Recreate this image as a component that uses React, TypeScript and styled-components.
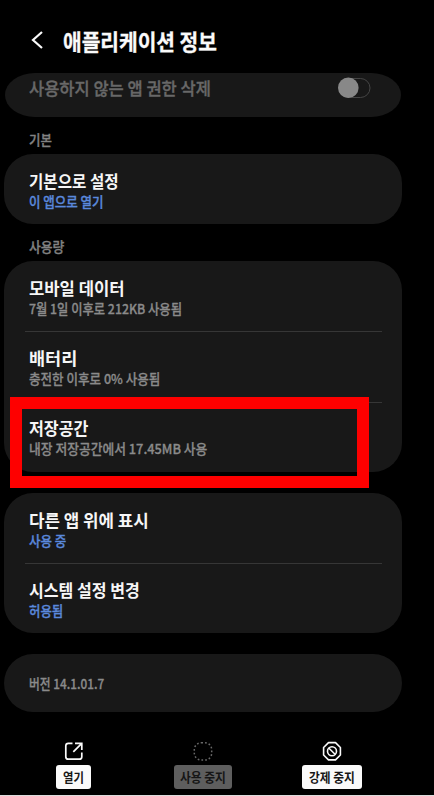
import React, { useLayoutEffect, useRef, useState } from "react";
import styled, { createGlobalStyle } from "styled-components";

const GlobalStyle = createGlobalStyle`
  *, *::before, *::after { box-sizing: border-box; }
  body {
    margin: 0;
    background: #000;
    color: #fafafa;
    font-family: "Noto Sans CJK KR", "Noto Sans", sans-serif;
  }
`;

const Screen = styled.main`
  width: 434px;
  height: 796px;
  display: flex;
  flex-direction: column;
  overflow: hidden;
  background: #000;
  border-bottom: 1px solid #dcdcdc;
`;

const Header = styled.header`
  height: 73px;
  flex: none;
  display: flex;
  align-items: center;
  gap: 19px;
  padding: 6px 0 0 30px;
`;

const BackIcon = styled.svg`
  width: 14px;
  height: 20px;
  flex: none;
`;

const Content = styled.div`
  width: 398px;
  margin-left: 4px;
  flex: none;
  display: flex;
  flex-direction: column;
`;

const Card = styled.section<{ $gap?: number }>`
  background: #181818;
  border-radius: 29px;
  margin-bottom: ${(p) => p.$gap ?? 0}px;
`;

const ToggleCard = styled.section`
  height: 44px;
  margin: 0 1px;
  padding: 4px 30px 0 24px;
  display: flex;
  align-items: flex-start;
  justify-content: space-between;
  background: #181818;
  border-radius: 30px / 22px;
`;

const SectionLabel = styled.h2<{ $height: number }>`
  height: ${(p) => p.$height}px;
  margin: 0;
  padding: 7px 0 0 25px;
  display: flex;
  align-items: center;
`;

const Row = styled.div<{ $divided?: boolean; $height: number; $inset: number }>`
  height: ${(p) => p.$height}px;
  margin: 0 20px 0 21px;
  padding: ${(p) => p.$inset}px 0 0 4px;
  border-bottom: ${(p) => (p.$divided ? "1px solid #363636" : "none")};
  display: flex;
  flex-direction: column;
`;

const VersionRow = styled.div`
  height: 58px;
  padding: 0 0 1px 25px;
  display: flex;
  align-items: center;
`;

type Tone = "title" | "row" | "sub" | "link" | "off" | "label" | "button";

interface ToneStyle {
  size: number;
  line: number;
  weight: number;
  color: string;
  stroke: number;
}

const tones: Record<Tone, ToneStyle> = {
  title: { size: 22, line: 26, weight: 700, color: "#fafafa", stroke: 0.3 },
  row: { size: 17.5, line: 21, weight: 700, color: "#f6f6f6", stroke: 0 },
  sub: { size: 13.5, line: 20, weight: 500, color: "#8a8a8a", stroke: 0.3 },
  link: { size: 13.5, line: 20, weight: 500, color: "#5a88dc", stroke: 0.35 },
  off: { size: 17.5, line: 21, weight: 500, color: "#686868", stroke: 0.35 },
  label: { size: 13.5, line: 20, weight: 500, color: "#828282", stroke: 0.35 },
  button: { size: 13, line: 18, weight: 700, color: "#161616", stroke: 0 },
};

const TextBox = styled.span<{ $width: number; $line: number }>`
  display: block;
  flex: none;
  width: ${(p) => p.$width}px;
  height: ${(p) => p.$line}px;
`;

const TextRun = styled.span<{ $tone: Tone }>`
  display: inline-block;
  white-space: nowrap;
  transform-origin: 0 50%;
  font-size: ${(p) => tones[p.$tone].size}px;
  line-height: ${(p) => tones[p.$tone].line}px;
  font-weight: ${(p) => tones[p.$tone].weight};
  color: ${(p) => tones[p.$tone].color};
  -webkit-text-stroke: ${(p) => tones[p.$tone].stroke}px currentColor;
  vertical-align: top;
`;

/** A single line of text condensed or widened to fill the given width. */
function Label({ tone, width, children }: { tone: Tone; width: number; children: string }) {
  const ref = useRef<HTMLSpanElement>(null);
  const [scale, setScale] = useState(1);
  useLayoutEffect(() => {
    if (ref.current) setScale(width / ref.current.offsetWidth);
  }, [width, children]);
  return (
    <TextBox $width={width} $line={tones[tone].line}>
      <TextRun ref={ref} $tone={tone} style={{ transform: `scaleX(${scale})` }}>
        {children}
      </TextRun>
    </TextBox>
  );
}

const Switch = styled.svg`
  width: 34px;
  height: 22px;
  flex: none;
`;

const Highlighted = styled.div`
  position: relative;
`;

const HighlightFrame = styled.div`
  position: absolute;
  left: 6px;
  top: -6px;
  width: 359px;
  height: 91px;
  border: 12px solid #fe0000;
`;

const ActionBar = styled.nav`
  width: 388px;
  margin: 28px 0 0 9px;
  display: grid;
  grid-template-columns: repeat(3, 1fr);
`;

const Action = styled.div`
  display: flex;
  flex-direction: column;
  align-items: center;
  gap: 3px;
`;

const ActionIcon = styled.svg`
  width: 22px;
  height: 22px;
  fill: none;
`;

const ActionButton = styled.button<{ $muted?: boolean; $width: number }>`
  width: ${(p) => p.$width}px;
  height: 24px;
  padding: 0 0 1px;
  border: 0;
  border-radius: 3px;
  display: flex;
  align-items: center;
  justify-content: center;
  font-family: inherit;
  background: ${(p) => (p.$muted ? "#5e5e5e" : "#fafafa")};
`;

interface ItemProps {
  title: string;
  titleWidth: number;
  detail: string;
  detailWidth: number;
  link?: boolean;
  divided?: boolean;
  height?: number;
  inset?: number;
}

function Item({ title, titleWidth, detail, detailWidth, link, divided, height = 70, inset = 16 }: ItemProps) {
  return (
    <Row $divided={divided} $height={height} $inset={inset}>
      <Label tone="row" width={titleWidth}>{title}</Label>
      <Label tone={link ? "link" : "sub"} width={detailWidth}>{detail}</Label>
    </Row>
  );
}

export default function App() {
  return (
    <>
      <GlobalStyle />
      <Screen>
        <Header>
          <BackIcon viewBox="0 0 14 20">
            <path d="M12 2 3 10l9 8" fill="none" stroke="#fafafa" strokeWidth="2.2" />
          </BackIcon>
          <Label tone="title" width={154}>애플리케이션 정보</Label>
        </Header>
        <Content>
          <ToggleCard>
            <Label tone="off" width={182}>사용하지 않는 앱 권한 삭제</Label>
            <Switch viewBox="0 0 34 22">
              <rect x="2" y="1.5" width="31" height="19" rx="9.5" fill="none" stroke="#454545" />
              <circle cx="11.3" cy="10.8" r="10.3" fill="#888" />
            </Switch>
          </ToggleCard>
          <SectionLabel $height={37}>
            <Label tone="label" width={23}>기본</Label>
          </SectionLabel>
          <Card>
            <Item title="기본으로 설정" titleWidth={90} detail="이 앱으로 열기" detailWidth={75} link />
          </Card>
          <SectionLabel $height={37}>
            <Label tone="label" width={35}>사용량</Label>
          </SectionLabel>
          <Card $gap={21}>
            <Item title="모바일 데이터" titleWidth={96} detail="7월 1일 이후로 212KB 사용됨" detailWidth={153} divided height={71} />
            <Item title="배터리" titleWidth={48} detail="충전한 이후로 0% 사용됨" detailWidth={131} divided height={71} inset={15} />
            <Highlighted>
              <Item title="저장공간" titleWidth={59} detail="내장 저장공간에서 17.45MB 사용" detailWidth={178} height={69} inset={14} />
              <HighlightFrame />
            </Highlighted>
          </Card>
          <Card $gap={21}>
            <Item title="다른 앱 위에 표시" titleWidth={120} detail="사용 중" detailWidth={37} link divided height={71} />
            <Item title="시스템 설정 변경" titleWidth={111} detail="허용됨" detailWidth={34} link height={69} inset={15} />
          </Card>
          <Card>
            <VersionRow>
              <Label tone="sub" width={75}>버전 14.1.01.7</Label>
            </VersionRow>
          </Card>
        </Content>
        <ActionBar>
          <Action>
            <ActionIcon viewBox="0 0 22 22" stroke="#fafafa" strokeWidth="1.7">
              <path d="M9.5 3.300H5.300A2.500 2.500 0 0 0 2.800 5.800V16.700A2.500 2.500 0 0 0 5.300 19.200H16.300A2.500 2.500 0 0 0 18.800 16.700V12.500" />
              <path d="M12 3.300H18.800V10M18.800 3.300 10.300 11.800" />
            </ActionIcon>
            <ActionButton $width={35}>
              <Label tone="button" width={21}>열기</Label>
            </ActionButton>
          </Action>
          <Action>
            <ActionIcon viewBox="0 0 22 22" stroke="#686868" strokeWidth="1.5">
              <rect x="2.300" y="2.700" width="17.400" height="17.400" rx="7" strokeDasharray="1.700 2.080" />
            </ActionIcon>
            <ActionButton $muted $width={58}>
              <Label tone="button" width={46}>사용 중지</Label>
            </ActionButton>
          </Action>
          <Action>
            <ActionIcon viewBox="0 0 22 22" stroke="#fafafa" strokeWidth="1.6">
              <path d="M7.500 2.600h7l4.900 4.900v7.500l-4.900 4.900h-7l-4.900-4.900v-7.500Z" strokeLinejoin="round" />
              <circle cx="11" cy="11.300" r="4.500" />
              <path d="m8 8.300 6 6" />
            </ActionIcon>
            <ActionButton $width={60}>
              <Label tone="button" width={46}>강제 중지</Label>
            </ActionButton>
          </Action>
        </ActionBar>
      </Screen>
    </>
  );
}
